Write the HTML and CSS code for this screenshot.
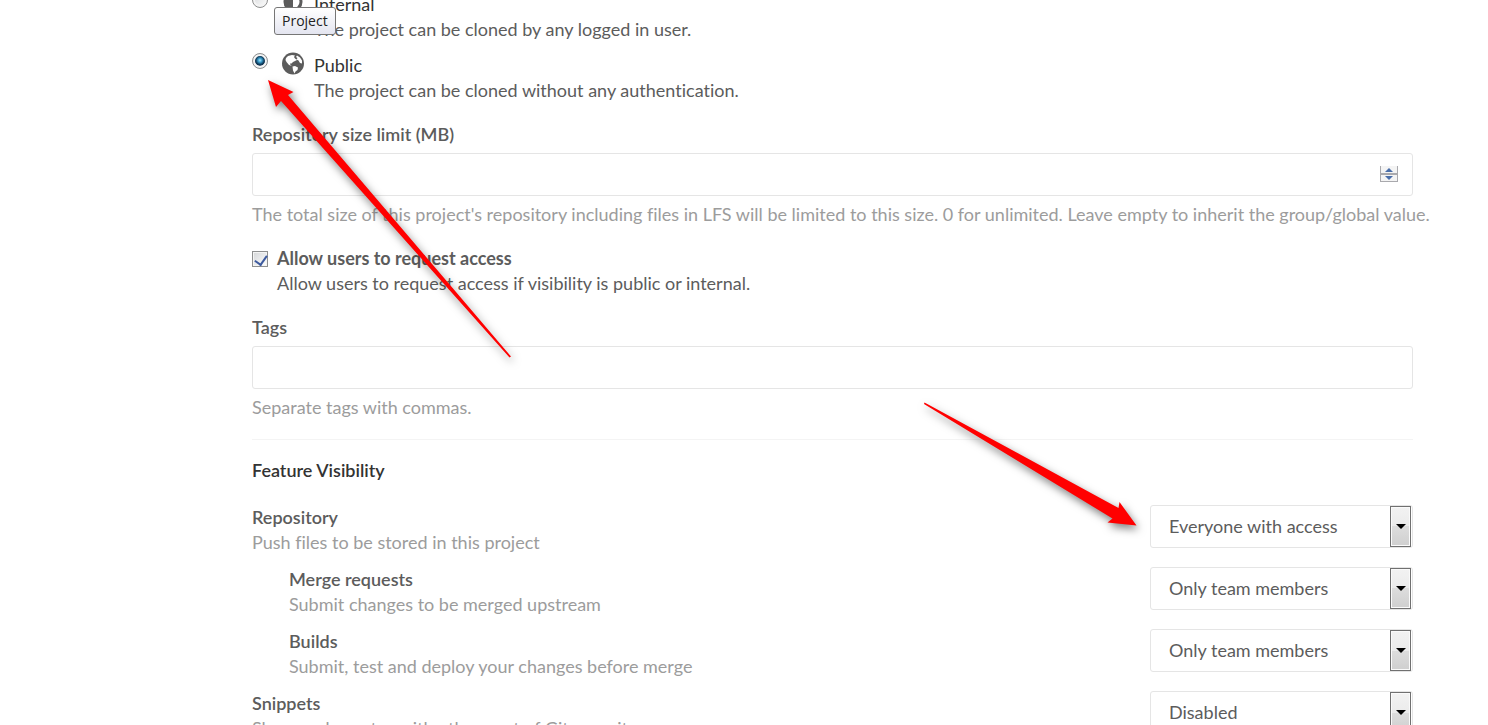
FILE: index.html
```html
<!DOCTYPE html>
<html lang="en">
<head>
<meta charset="utf-8">
<title>Project settings</title>
<link rel="stylesheet" href="styles.css">
</head>
<body>
<main class="settings">
  <form class="form">
    <div class="option">
      <input class="radio" type="radio" name="visibility" id="internal">
      <svg class="option-icon" viewBox="0 0 22 22" aria-hidden="true"><circle cx="11" cy="10" r="8" fill="none" stroke="#5c5c5c" stroke-width="3"/><path d="M11 1a9 9 0 0 0 0 18z" fill="#5c5c5c"/></svg>
      <div>
        <label class="option-title" for="internal">Internal</label>
        <p>The project can be cloned by any logged in user.</p>
      </div>
      <span class="tooltip" role="tooltip">Project</span>
    </div>
    <div class="option">
      <input class="radio" type="radio" name="visibility" id="public" checked>
      <svg class="option-icon" viewBox="0 0 22 22" aria-hidden="true"><circle cx="11" cy="10.500" r="11" fill="#5c5c5c"/><path d="M4 5 6 3 10 2 13 2.500 12 4 13 5.500 15 7 13 8 11 9 9.500 10.500 8 10.500 8.500 12 10 13 7 12 4.500 9 3.500 7zM15 2.500l3 2 2 3 0 3-2-.5-1.500-2.500-2-1 1-1.500-1.500-1zM10.500 13.500l2.500-.5 3 1.500-.5 2.500-2 1.500-1 2-1.500-3z" fill="#fff"/></svg>
      <div>
        <label class="option-title" for="public">Public</label>
        <p>The project can be cloned without any authentication.</p>
      </div>
    </div>

    <div class="group">
      <label class="label" for="limit">Repository size limit (MB)</label>
      <div class="number">
        <input class="field" type="number" id="limit">
        <svg class="spinner" viewBox="0 0 18 16" aria-hidden="true"><path d="M0 0h18v16H0z" fill="#a9a9ad"/><path d="M1 0h16v7H1zM1 9h16v6H1z" fill="#f4f4f4"/><path d="M5 6h8L9 2zM5 10h8l-4 4z" fill="#4a6ea9"/></svg>
      </div>
      <p class="help">The total size of this project's repository including files in LFS will be limited to this size. 0 for unlimited. Leave empty to inherit the group/global value.</p>
    </div>

    <div class="group check-row">
      <input class="check" type="checkbox" id="access" checked>
      <div>
        <label class="check-title" for="access">Allow users to request access</label>
        <p>Allow users to request access if visibility is public or internal.</p>
      </div>
    </div>

    <div class="group">
      <label class="label" for="tags">Tags</label>
      <input class="field" type="text" id="tags">
      <p class="help">Separate tags with commas.</p>
    </div>

    <hr class="rule">
    <h2 class="heading">Feature Visibility</h2>

    <div class="features">
      <div class="feature">
        <div><label class="feature-title" for="repo">Repository</label><p class="hint">Push files to be stored in this project</p></div>
        <div class="select"><select class="select-box" id="repo"><option>Everyone with access</option></select><span class="select-arrow"></span></div>
      </div>
      <div class="feature nested">
        <div><label class="feature-title" for="merge">Merge requests</label><p class="hint">Submit changes to be merged upstream</p></div>
        <div class="select"><select class="select-box" id="merge"><option>Only team members</option></select><span class="select-arrow"></span></div>
      </div>
      <div class="feature nested">
        <div><label class="feature-title" for="builds">Builds</label><p class="hint">Submit, test and deploy your changes before merge</p></div>
        <div class="select"><select class="select-box" id="builds"><option>Only team members</option></select><span class="select-arrow"></span></div>
      </div>
      <div class="feature">
        <div><label class="feature-title" for="snippets">Snippets</label><p class="hint">Share code pastes with others out of Git repository</p></div>
        <div class="select"><select class="select-box" id="snippets"><option>Disabled</option></select><span class="select-arrow"></span></div>
      </div>
    </div>
  </form>
</main>
<svg class="arrows" width="1488" height="725" viewBox="0 0 1488 725" aria-hidden="true">
  <path d="M268 80 293.500 92 288 95 511 356.500 509.500 357.500 281 101 276 107z"/>
  <path d="M1136.500 525.500 1119.500 502 1118.500 508 924.500 402.500 924 404 1112.500 518.500 1107.500 522.500z"/>
</svg>
</body>
</html>
```

FILE: styles.css
```css
* { box-sizing: border-box; }

body {
  margin: 0;
  height: 100vh;
  overflow: hidden;
  background: #fff;
  color: #5c5c5c;
  font: 18px/25px Lato, "Open Sans", sans-serif;
  font-variant-ligatures: none;
}

p, h2 { margin: 0; }

/* The page is scrolled part of the way down. */
.settings {
  margin-top: -8px;
  padding: 0 75px 0 252px;
}

.form { display: flow-root; }

.option {
  position: relative;
  display: flex;
  margin-bottom: 11px;
}

.option-icon {
  overflow: visible;
  width: 22px;
  height: 22px;
  margin: 0 10px 0 14px;
}

.option-title {
  display: block;
  color: #333;
}

.radio, .check {
  appearance: none;
  flex: none;
  width: 16px;
  height: 16px;
  margin: 0;
  border: 1px solid #8e8f8f;
  background: linear-gradient(135deg, #d4d6d8, #fff);
}

.radio {
  border-radius: 50%;
  box-shadow: inset 0 0 0 2px #f4f4f4;
}

.radio:checked {
  background: radial-gradient(circle at 50% 45%, #a8e8fc 0, #3a9ccc 2px, #10405f 4px, #10304f 5px, #d5dade 6px);
}

.check {
  position: relative;
  margin-top: 5px;
  box-shadow: inset 0 0 0 1px #f4f4f4;
}

.check:checked::after {
  content: "";
  position: absolute;
  left: 4px;
  top: 1px;
  width: 6px;
  height: 10px;
  border: solid #3d5a9e;
  border-width: 0 2px 2px 0;
  transform: rotate(35deg);
}

.tooltip {
  position: absolute;
  left: 22px;
  top: 15px;
  padding: 3px 7px;
  border: 1px solid #767676;
  border-radius: 3px;
  background: linear-gradient(#fff, #e4e5f0);
  color: #222;
  font: 14px/20px "Open Sans", "Noto Sans", sans-serif;
}

.group { margin-top: 19px; }

.label {
  display: block;
  margin-bottom: 6px;
  font-weight: 600;
}

.number { position: relative; }

.field {
  display: block;
  width: 100%;
  height: 43px;
  padding: 8px 18px;
  border: 1px solid #e5e5e5;
  border-radius: 3px;
  background: #fff;
  color: inherit;
  font: inherit;
  appearance: none;
}

.number .field { appearance: textfield; }

.spinner {
  position: absolute;
  right: 15px;
  top: 13px;
  width: 18px;
  height: 16px;
}

.help {
  margin-top: 6px;
  color: #9c9c9c;
  white-space: nowrap;
}

.hint { color: #9c9c9c; }

.check-row {
  display: flex;
  gap: 9px;
}

.check-title {
  display: block;
  font-weight: 700;
}

.rule {
  margin: 19px 0 18px;
  border: 0;
  border-top: 1px solid #f4f4f4;
}

.heading {
  margin-bottom: 22px;
  color: #333;
  font-size: inherit;
  font-weight: 600;
}

.features {
  display: grid;
  gap: 12px;
}

.feature {
  display: flex;
  justify-content: space-between;
}

.nested > :first-child { padding-left: 37px; }

.feature-title {
  display: block;
  font-weight: 600;
}

.select {
  position: relative;
  width: 263px;
  height: 43px;
}

.select-box {
  appearance: none;
  width: 100%;
  height: 43px;
  padding: 0 40px 0 18px;
  border: 1px solid #e5e5e5;
  border-radius: 3px;
  background: #fff;
  color: #5c5c5c;
  font: inherit;
}

.select-arrow {
  position: absolute;
  top: 1px;
  right: 2px;
  display: grid;
  place-items: center;
  width: 21px;
  height: 41px;
  border: 1px solid #707070;
  background: linear-gradient(#f2f2f2, #ebebeb 50%, #dddddd 50%, #cfcfcf);
  box-shadow: inset 0 0 0 1px #fafafa;
  pointer-events: none;
}

.select-arrow::after {
  content: "";
  border: solid transparent;
  border-width: 5px 5px 0;
  border-top-color: #000;
}

.arrows {
  position: absolute;
  left: 0;
  top: 0;
  fill: #f00;
  pointer-events: none;
  filter: drop-shadow(2px 4px 4px rgba(0, 0, 0, 0.5));
}
```
